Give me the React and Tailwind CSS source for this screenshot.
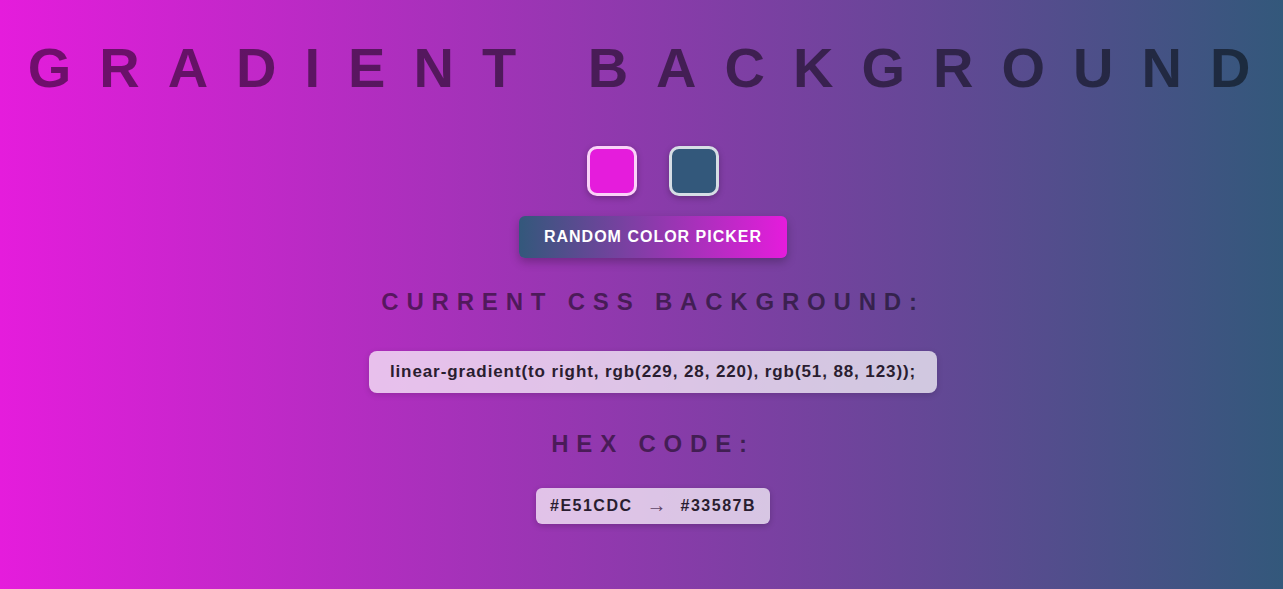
export default function App() {
  const from = 'rgb(229, 28, 220)';
  const to = 'rgb(51, 88, 123)';

  return (
    <div className="min-h-[589px] w-full bg-[linear-gradient(to_right,rgb(229,28,220),rgb(51,88,123))] font-['Liberation_Sans',Arial,sans-serif] pl-[23px] pt-[36px] overflow-hidden">
      <div className="flex flex-col items-center">
        {/* Title */}
        <h1 className="text-[56px] leading-[64px] font-bold tracking-[28px] text-black/50 whitespace-nowrap">
          GRADIENT BACKGROUND
        </h1>

        {/* Colour inputs */}
        <div className="mt-[46px] flex gap-[32px]">
          <div className="w-[50px] h-[50px] rounded-[10px] border-[3px] border-white/80 bg-[#e51cdc] shadow-[0_2px_6px_rgba(0,0,0,0.25)]" />
          <div className="w-[50px] h-[50px] rounded-[10px] border-[3px] border-white/80 bg-[#33587b] shadow-[0_2px_6px_rgba(0,0,0,0.25)]" />
        </div>

        {/* Button */}
        <button className="mt-[20px] w-[268px] h-[42px] rounded-[6px] bg-[linear-gradient(to_right,rgb(51,88,123),rgb(229,28,220))] text-white font-bold text-[16px] tracking-[1px] shadow-[0_4px_10px_rgba(0,0,0,0.25)]">
          RANDOM COLOR PICKER
        </button>

        {/* Current CSS */}
        <h2 className="mt-[30px] text-[24px] leading-[28px] font-bold tracking-[7.8px] text-black/50">
          CURRENT CSS BACKGROUND:
        </h2>
        <div className="mt-[35px] h-[42px] px-[21px] flex items-center rounded-[8px] bg-white/70 text-[#2a1d30] font-bold text-[17px] tracking-[0.9px] shadow-[0_2px_6px_rgba(0,0,0,0.15)] whitespace-nowrap">
          linear-gradient(to right, {from}, {to});
        </div>

        {/* Hex */}
        <h2 className="mt-[37px] text-[24px] leading-[28px] font-bold tracking-[7.8px] text-black/50">
          HEX CODE:
        </h2>
        <div className="mt-[30px] h-[36px] px-[14px] flex items-center rounded-[6px] bg-white/70 text-[#2a1d30] font-bold text-[16px] tracking-[1.5px] shadow-[0_2px_6px_rgba(0,0,0,0.2)]">
          <span>#E51CDC</span>
          <span className="mx-[14px] -mt-[3px] font-normal text-[20px] leading-[20px] text-[#5e4466] tracking-normal">→</span>
          <span>#33587B</span>
        </div>
      </div>
    </div>
  );
}
